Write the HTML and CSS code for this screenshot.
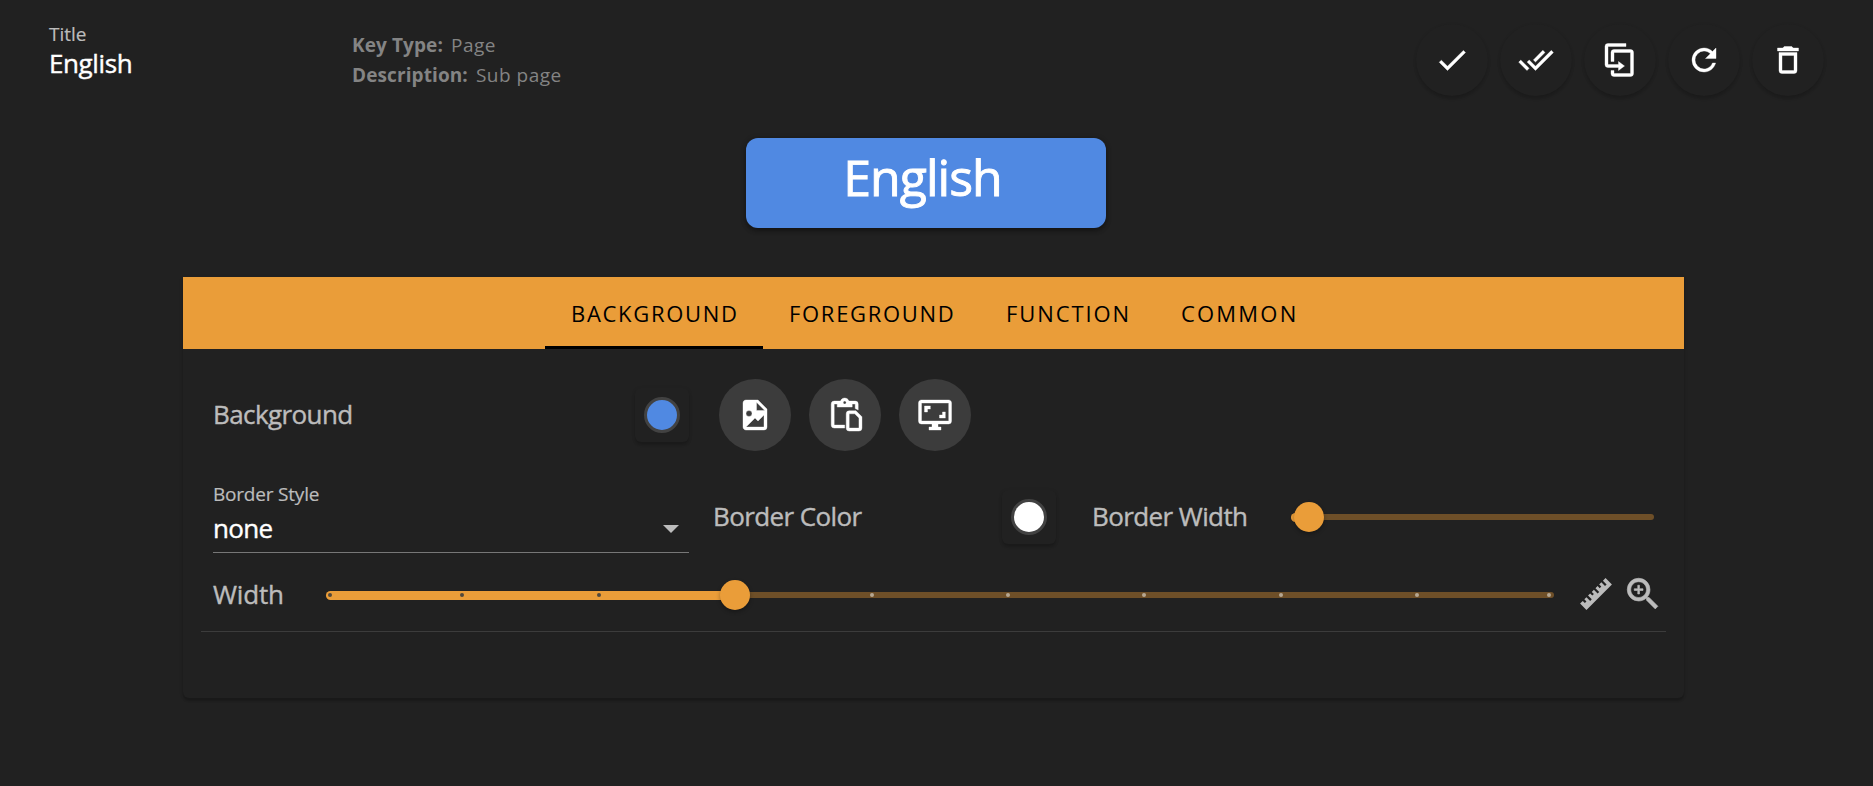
FILE: index.html
```html
<!DOCTYPE html>
<html lang="en">
<head>
<meta charset="utf-8">
<title>Key editor</title>
<link rel="stylesheet" href="styles.css">
</head>
<body>
<header class="top">
  <div class="field title-field">
    <div class="field-label title-label"><span>Title</span></div>
    <div class="field-value title-value"><span>English</span></div>
  </div>
  <div class="meta">
    <div class="meta-line"><b class="meta-key">Key Type:</b><span class="meta-text">Page</span></div>
    <div class="meta-line"><b class="meta-key">Description:</b><span class="meta-text">Sub page</span></div>
  </div>
  <div class="actions">
    <button class="fab"><svg viewBox="0 0 24 24"><path d="M21,7L9,19L3.5,13.5L4.91,12.09L9,16.17L19.59,5.59L21,7Z"/></svg></button>
    <button class="fab"><svg viewBox="0 0 24 24"><path d="M0.41,13.41L6,19L7.41,17.58L1.83,12M22.24,5.58L11.66,16.17L7.5,12L6.07,13.41L11.66,19L23.66,7M18,7L16.59,5.58L10.24,11.93L11.66,13.34L18,7Z"/></svg></button>
    <button class="fab"><svg viewBox="0 0 24 24"><path d="M11,17H4A2,2 0 0,1 2,15V3A2,2 0 0,1 4,1H16V3H4V15H11V13L15,16L11,19V17M19,21V7H8V13H6V7A2,2 0 0,1 8,5H19A2,2 0 0,1 21,7V21A2,2 0 0,1 19,23H8A2,2 0 0,1 6,21V19H8V21H19Z"/></svg></button>
    <button class="fab"><svg viewBox="0 0 24 24"><path d="M17.65,6.35C16.2,4.9 14.21,4 12,4A8,8 0 0,0 4,12A8,8 0 0,0 12,20C15.73,20 18.84,17.45 19.73,14H17.65C16.83,16.33 14.61,18 12,18A6,6 0 0,1 6,12A6,6 0 0,1 12,6C13.66,6 15.14,6.69 16.22,7.78L13,11H20V4L17.65,6.35Z"/></svg></button>
    <button class="fab"><svg viewBox="0 0 24 24"><path d="M6,19A2,2 0 0,0 8,21H16A2,2 0 0,0 18,19V7H6V19M8,9H16V19H8V9M15.5,4L14.5,3H9.5L8.5,4H5V6H19V4H15.5Z"/></svg></button>
  </div>
</header>

<div class="preview"><span>English</span></div>

<main class="card">
  <nav class="tabs">
    <div class="tab tab-active"><span>BACKGROUND</span></div>
    <div class="tab tab-fore"><span>FOREGROUND</span></div>
    <div class="tab tab-func"><span>FUNCTION</span></div>
    <div class="tab tab-comm"><span>COMMON</span></div>
  </nav>

  <section class="row row-bg">
    <div class="label label-bg"><span>Background</span></div>
    <div class="swatch"><i class="dot dot-blue"></i></div>
    <div class="rounds">
      <button class="round"><svg viewBox="0 0 24 24"><path d="M13,9H18.5L13,3.5V9M6,2H14L20,8V20A2,2 0 0,1 18,22H6C4.89,22 4,21.1 4,20V4C4,2.89 4.89,2 6,2M6,20H15L18,20V12L14,16L12,14L6,20M8,9A2,2 0 0,0 6,11A2,2 0 0,0 8,13A2,2 0 0,0 10,11A2,2 0 0,0 8,9Z"/></svg></button>
      <button class="round"><svg viewBox="0 0 24 24"><path transform="translate(0.8 -0.3)" fill-rule="evenodd" d="M4,3H8.2C8.6,1.8 9.7,1 11,1C12.3,1 13.4,1.8 13.8,3H18A2,2 0 0,1 20,5V9L18,8V5H16V7H6V5H4V19H11V21H4A2,2 0 0,1 2,19V5A2,2 0 0,1 4,3M11,3A1,1 0 1,0 11,5A1,1 0 1,0 11,3M14,9.5H18.5L22.5,13.5V21A2,2 0 0,1 20.5,23H14A2,2 0 0,1 12,21V11.5A2,2 0 0,1 14,9.5M14,11.5V21H20.5V14.3L17.7,11.5Z"/></svg></button>
      <button class="round"><svg viewBox="0 0 24 24"><path d="M9,6H5V10H7V8H9M19,10H17V12H15V14H19M21,16H3V4H21M21,2H3C1.89,2 1,2.89 1,4V16A2,2 0 0,0 3,18H10V20H8V22H16V20H14V18H21A2,2 0 0,0 23,16V4C23,2.89 22.1,2 21,2"/></svg></button>
    </div>
  </section>

  <section class="row row-border">
    <div class="select">
      <div class="field-label select-label"><span>Border Style</span></div>
      <div class="select-box"><span class="field-value none-value">none</span><i class="arrow"></i></div>
    </div>
    <div class="label label-color"><span>Border Color</span></div>
    <div class="swatch"><i class="dot dot-white"></i></div>
    <div class="label label-bwidth"><span>Border Width</span></div>
    <div class="slider slider-border"><i class="track"></i><i class="fill" style="width:18px"></i><i class="thumb" style="left:18px"></i></div>
  </section>

  <section class="row row-width">
    <div class="label label-width"><span>Width</span></div>
    <div class="slider slider-width">
      <i class="track"></i><i class="fill" style="width:409px"></i>
      <i class="tick tick-on" style="left:4px"></i><i class="tick tick-on" style="left:136px"></i><i class="tick tick-on" style="left:273px"></i>
      <i class="tick" style="left:546px"></i><i class="tick" style="left:682px"></i><i class="tick" style="left:818px"></i><i class="tick" style="left:955px"></i><i class="tick" style="left:1091px"></i><i class="tick" style="left:1223px"></i>
      <i class="thumb" style="left:409px"></i>
    </div>
    <svg class="ruler" viewBox="0 0 24 24"><path d="M1.39,18.36L3.16,16.6L4.58,18L5.64,16.95L4.22,15.54L5.64,14.12L8.11,16.6L9.17,15.54L6.7,13.06L8.11,11.65L9.53,13.06L10.59,12L9.17,10.59L10.59,9.17L13.06,11.65L14.12,10.59L11.65,8.11L13.06,6.7L14.47,8.11L15.54,7.05L14.12,5.64L15.54,4.22L18,6.7L19.07,5.64L16.6,3.16L18.36,1.39L22.61,5.64L5.64,22.61L1.39,18.36Z"/></svg>
    <svg class="magnify" viewBox="0 0 24 24"><path d="M15.5,14L20.5,19L19,20.5L14,15.5V14.71L13.73,14.43C12.59,15.41 11.11,16 9.5,16A6.5,6.5 0 0,1 3,9.5A6.5,6.5 0 0,1 9.5,3A6.5,6.5 0 0,1 16,9.5C16,11.11 15.41,12.59 14.43,13.73L14.71,14H15.5M9.5,14C12,14 14,12 14,9.5C14,7 12,5 9.5,5C7,5 5,7 5,9.5C5,12 7,14 9.5,14M12,10H10V12H9V10H7V9H9V7H10V9H12V10Z"/></svg>
  </section>
</main>
</body>
</html>
```
FILE: styles.css
```css
* { box-sizing: border-box; }
html, body { height: 100%; }
body {
  margin: 0;
  overflow: hidden;
  background: #212121;
  color: #fff;
  font-family: "Open Sans", "Noto Sans", sans-serif;
  font-size: 26px;
}
span, b { white-space: nowrap; }
svg { display: block; fill: currentColor; }
button { border: 0; padding: 0; color: #fff; font: inherit; display: grid; place-items: center; }
button svg { width: 36px; height: 36px; stroke: currentColor; stroke-width: .25px; }

.top { display: flex; height: 138px; padding-left: 49px; }
.title-field { width: 303px; padding-top: 20px; }
.field-label { font-size: 19px; line-height: 28px; color: #bcbcbc; -webkit-text-stroke: .2px; }
.field-value { font-size: 26px; line-height: 31px; color: #fff; -webkit-text-stroke: .4px; }
.title-value { letter-spacing: -0.4px; }

.meta { width: 1064px; padding-top: 30px; font-size: 19px; line-height: 30px; color: #848484; }
.meta-line { display: flex; gap: 8px; }
.meta-key { font-weight: 700; letter-spacing: .1px; }
.meta-text { letter-spacing: .5px; }

.actions { display: flex; gap: 12px; padding-top: 24px; }
.fab {
  width: 72px; height: 72px; border-radius: 50%; background: #212121;
  box-shadow: 0 3px 3px rgba(0,0,0,.15), 0 1px 4px rgba(0,0,0,.05);
}

.preview {
  width: 360px; height: 90px; margin-left: 746px; padding-right: 7px; border-radius: 12px;
  background: #5089e2; text-align: center;
  font-size: 50px; line-height: 79px; letter-spacing: -1px;
  -webkit-text-stroke: .9px;
  box-shadow: 0 3px 5px rgba(0,0,0,.3), 0 1px 6px rgba(0,0,0,.2);
}

.card {
  width: 1501px; height: 421px; margin: 49px 0 0 183px; border-radius: 0 0 6px 6px;
  box-shadow: 0 3px 2px rgba(0,0,0,.18), 0 1px 4px rgba(0,0,0,.1);
}
.tabs { display: flex; height: 72px; padding-left: 362px; background: #ea9d39; color: #000; }
.tab { padding: 0 0 0 26px; font-size: 22px; line-height: 72px; letter-spacing: 1.7px; }
.tab-active { width: 218px; border-bottom: 3px solid #000; }
.tab-fore { width: 217px; }
.tab-func { width: 175px; letter-spacing: 1.9px; }
.tab-comm { letter-spacing: 2.2px; }

.row { display: flex; align-items: center; }
.label { color: #bcbcbc; font-size: 26px; line-height: 36px; padding-bottom: 2px; letter-spacing: -.6px; -webkit-text-stroke: .4px; }
.row-bg { height: 132px; padding-left: 30px; }
.label-bg { width: 422px; }
.swatch {
  width: 54px; height: 54px; border-radius: 6px; display: grid; place-items: center; background: #212121;
  box-shadow: 0 3px 3px rgba(0,0,0,.16), 0 1px 4px rgba(0,0,0,.08);
}
.dot { width: 36px; height: 36px; border-radius: 50%; border: 3px solid #424242; }
.dot-blue { background: #5089e2; }
.dot-white { background: #fff; }
.rounds { display: flex; gap: 18px; margin-left: 30px; }
.round { width: 72px; height: 72px; border-radius: 50%; background: #3c3c3c; }

.row-border { height: 72px; padding-left: 30px; }
.select { width: 476px; height: 72px; margin-right: 24px; border-bottom: 1px solid #777; }
.select-label { line-height: 26px; letter-spacing: -.2px; }
.select-box { display: flex; justify-content: space-between; align-items: center; height: 40px; padding: 3px 10px 0 0; }
.none-value { letter-spacing: -.7px; }
.arrow { border: 8px solid transparent; border-top-color: #bcbcbc; border-bottom: 0; }
.label-color { width: 289px; }
.label-bwidth { width: 199px; margin-left: 36px; }

.slider { position: relative; height: 30px; }
.slider-border { width: 363px; }
.slider-width { width: 1228px; margin-top: 2px; }
.slider i { position: absolute; }
.track { left: 0; right: 0; top: 12px; height: 6px; border-radius: 3px; background: #6e4f28; }
.fill { left: 0; top: 11px; height: 9px; border-radius: 5px; background: #ea9d39; }
.thumb { top: 0; width: 30px; height: 30px; margin-left: -15px; border-radius: 50%; background: #ea9d39; box-shadow: 0 2px 4px rgba(0,0,0,.3); }
.tick { top: 13px; width: 4px; height: 4px; margin-left: -2px; border-radius: 50%; background: #b5a793; }
.tick-on { background: #51483c; }

.row-width { height: 79px; margin: 0 18px; padding: 3px 0 0 12px; border-bottom: 1px solid #3c3c3c; color: #bcbcbc; }
.label-width { width: 113px; padding-bottom: 0; letter-spacing: -.2px; }
.ruler { width: 36px; height: 36px; margin: 1px 0 0 24px; }
.magnify { width: 42px; height: 42px; margin: 1px 0 0 8px; stroke: currentColor; stroke-width: .35px; }
```
